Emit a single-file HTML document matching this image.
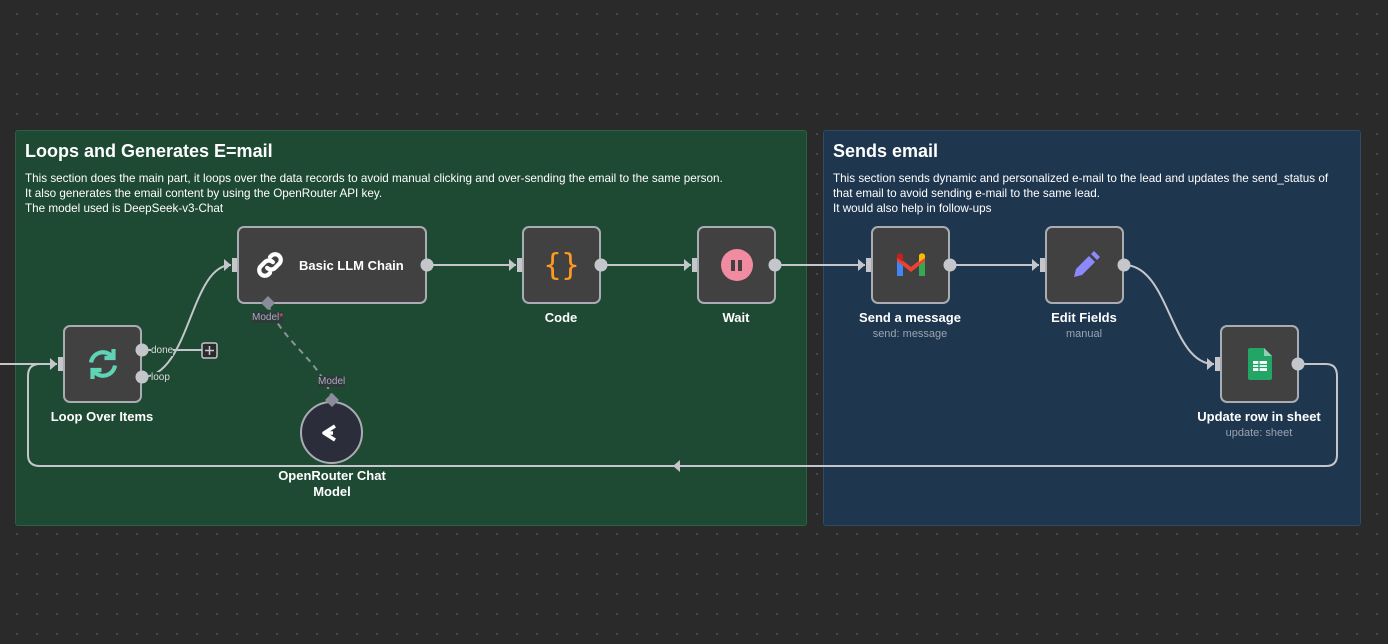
<!DOCTYPE html>
<html><head><meta charset="utf-8"><style>
*{margin:0;padding:0;box-sizing:border-box}
body{width:1388px;height:644px;overflow:hidden;background:#2a2a2a;background-image:radial-gradient(#4a4a4a 1px,transparent 1.2px);background-size:20px 20px;background-position:7px 4px;font-family:"Liberation Sans",sans-serif;position:relative}
.sticky{position:absolute;border:1px solid;border-radius:3px}
.sticky h1{position:absolute;left:9px;top:10px;font-size:18px;font-weight:bold;color:#fff}
.sticky p{position:absolute;left:9px;top:40px;font-size:11.7px;line-height:15px;color:#fff}
.node{position:absolute;width:79px;height:78px;background:#414141;border:2px solid #a9acb3;border-radius:7px;display:flex;align-items:center;justify-content:center}
.lbl{position:absolute;color:#fff;font-size:13px;font-weight:bold;text-align:center;width:200px;margin-left:-100px}
.sub{position:absolute;color:#9aa3af;font-size:11px;text-align:center;width:200px;margin-left:-100px}
svg.e{position:absolute;left:0;top:0}
</style></head><body>
<div class="sticky" style="left:15px;top:130px;width:792px;height:396px;background:#1e4a33;border-color:#2f5e42">
<h1>Loops and Generates E=mail</h1>
<p>This section does the main part, it loops over the data records to avoid manual clicking and over-sending the email to the same person.<br>It also generates the email content by using the OpenRouter API key.<br>The model used is DeepSeek-v3-Chat</p></div>
<div class="sticky" style="left:823px;top:130px;width:538px;height:396px;background:#1f364f;border-color:#2e4a66">
<h1>Sends email</h1>
<p>This section sends dynamic and personalized e-mail to the lead and updates the send_status of<br>that email to avoid sending e-mail to the same lead.<br>It would also help in follow-ups</p></div>

<svg class="e" width="1388" height="644" fill="none" stroke="#c4c6cc" stroke-width="2">
<path d="M0 364H57"/>
<path d="M142 377C190 377 190 265 231 265"/>
<path d="M142 350H203"/>
<path d="M427 265H516M601 265H691M775 265H865M950 265H1039"/>
<path d="M1124 265C1170 265 1170 364 1214 364"/>
<path d="M1298 364H1326Q1337 364 1337 376V455Q1337 466 1326 466H40Q28 466 28 455V376Q28 364 40 364H57"/>
<path d="M268 304C280 340 320 360 332 398" stroke="#8a9399" stroke-dasharray="6 5"/>
</svg>

<div class="node" style="left:237px;top:226px;width:190px;justify-content:flex-start;padding-left:14px">
<svg width="34" height="34" viewBox="0 0 24 24" fill="none" stroke="#fff" stroke-width="3" stroke-linecap="round"><path d="M10 14a4 4 0 0 0 5.6 0l3.2-3.2a4 4 0 0 0-5.6-5.6l-1.2 1.2"/><path d="M14 10a4 4 0 0 0-5.6 0l-3.2 3.2a4 4 0 0 0 5.6 5.6l1.2-1.2"/></svg>
<span style="color:#fff;font-weight:bold;font-size:13px;margin-left:12px">Basic LLM Chain</span></div>

<div class="node" style="left:63px;top:325px">
<svg width="36" height="36" viewBox="0 0 24 24" fill="none" stroke="#5fd3b5" stroke-width="2.8"><path d="M4 11a8 8 0 0 1 14-4"/><path d="M20 13a8 8 0 0 1-14 4"/><path d="M19 2v6h-6" /><path d="M5 22v-6h6"/></svg></div>
<div class="lbl" style="left:102px;top:409px">Loop Over Items</div>

<div class="node" style="left:522px;top:226px"><span style="color:#ff9922;font-size:30px;font-family:'DejaVu Sans Mono',monospace">{}</span></div>
<div class="lbl" style="left:561px;top:310px">Code</div>

<div class="node" style="left:697px;top:226px"><div style="width:32px;height:32px;border-radius:50%;background:#f08ba1;display:flex;align-items:center;justify-content:center;gap:3px"><i style="width:4px;height:11px;background:#414141"></i><i style="width:4px;height:11px;background:#414141"></i></div></div>
<div class="lbl" style="left:736px;top:310px">Wait</div>

<div class="node" style="left:871px;top:226px"><svg width="32" height="26" viewBox="0 0 32 26"><path d="M2 5v19h6V10z" fill="#4285f4"/><path d="M24 10v14h6V5z" fill="#34a853"/><path d="M2 4l14 11 14-11v5L16 20 2 9z" fill="#ea4335"/><path d="M2 4a3 3 0 0 1 5-2l1 1v7L2 6z" fill="#c5221f"/><path d="M30 4a3 3 0 0 0-5-2l-1 1v7l6-4z" fill="#fbbc04"/></svg></div>
<div class="lbl" style="left:910px;top:310px">Send a message</div><div class="sub" style="left:910px;top:328px">send: message</div>

<div class="node" style="left:1045px;top:226px"><svg width="32" height="32" viewBox="0 0 32 32"><path d="M5 28l2-8L20 7l6 6-13 13z" fill="#8c89ff"/><path d="M22 5l3-3 6 6-3 3z" fill="#8c89ff"/></svg></div>
<div class="lbl" style="left:1084px;top:310px">Edit Fields</div><div class="sub" style="left:1084px;top:328px">manual</div>

<div class="node" style="left:1220px;top:325px"><svg width="24" height="32" viewBox="0 0 24 32"><path d="M0 2a2 2 0 0 1 2-2h14l8 8v22a2 2 0 0 1-2 2H2a2 2 0 0 1-2-2z" fill="#23a566"/><path d="M16 0v8h8z" fill="#8ed1b1"/><rect x="5" y="13" width="14" height="10" fill="#fff"/><path d="M5 16.5h14M5 19.5h14M11 13v10" stroke="#23a566" stroke-width="1.3"/></svg></div>
<div class="lbl" style="left:1259px;top:409px">Update row in sheet</div><div class="sub" style="left:1259px;top:427px">update: sheet</div>

<div style="position:absolute;left:300px;top:401px;width:63px;height:63px;border-radius:50%;background:#2c2d3a;border:2px solid #a9acb3;display:flex;align-items:center;justify-content:center">
<svg width="26" height="20" viewBox="0 0 26 20" fill="none" stroke="#fff" stroke-width="3.5" stroke-linejoin="round"><path d="M16 3L5 10l11 7"/><path d="M5 10h9"/></svg></div>
<div class="lbl" style="left:332px;top:468px;line-height:16px">OpenRouter Chat<br>Model</div>

<svg class="e" width="1388" height="644" fill="none" stroke="#c4c6cc" stroke-width="2">
<g fill="#c4c6cc" stroke="none">
<path d="M224 259l7 6-7 6z"/><path d="M509 259l7 6-7 6z"/><path d="M684 259l7 6-7 6z"/><path d="M858 259l7 6-7 6z"/><path d="M1032 259l7 6-7 6z"/><path d="M1207 358l7 6-7 6z"/><path d="M50 358l7 6-7 6z"/><path d="M680 460l-7 6 7 6z"/>
<rect x="232" y="258" width="5" height="14"/><rect x="517" y="258" width="5" height="14"/><rect x="692" y="258" width="5" height="14"/><rect x="866" y="258" width="5" height="14"/><rect x="1040" y="258" width="5" height="14"/><rect x="1215" y="357" width="5" height="14"/><rect x="58" y="357" width="5" height="14"/>
<circle cx="427" cy="265" r="6.5"/><circle cx="601" cy="265" r="6.5"/><circle cx="775" cy="265" r="6.5"/><circle cx="950" cy="265" r="6.5"/><circle cx="1124" cy="265" r="6.5"/><circle cx="1298" cy="364" r="6.5"/><circle cx="142" cy="350" r="6.5"/><circle cx="142" cy="377" r="6.5"/>
<path d="M268 296l7 7-7 7-7-7z" fill="#8a8d99"/><path d="M332 393l7 7-7 7-7-7z" fill="#8a8d99"/>
</g>
<rect x="202" y="343" width="15" height="15" rx="2" fill="#2b2b2b" stroke="#c4c6cc" stroke-width="1.5"/>
<path d="M209.5 346v9M205 350.5h9" stroke-width="1.5"/>
</svg>
<div style="position:absolute;left:151px;top:345px;font-size:10px;color:#dcdcdc;background:#1e4a33">done</div>
<div style="position:absolute;left:151px;top:372px;font-size:10px;color:#dcdcdc;background:#1e4a33">loop</div>
<div style="position:absolute;left:252px;top:312px;font-size:10px;color:#aab;background:#2e3a3a">Model<span style="color:#f55">*</span></div>
<div style="position:absolute;left:318px;top:376px;font-size:10px;color:#aab;background:#2e3a3a">Model</div>
</body></html>
